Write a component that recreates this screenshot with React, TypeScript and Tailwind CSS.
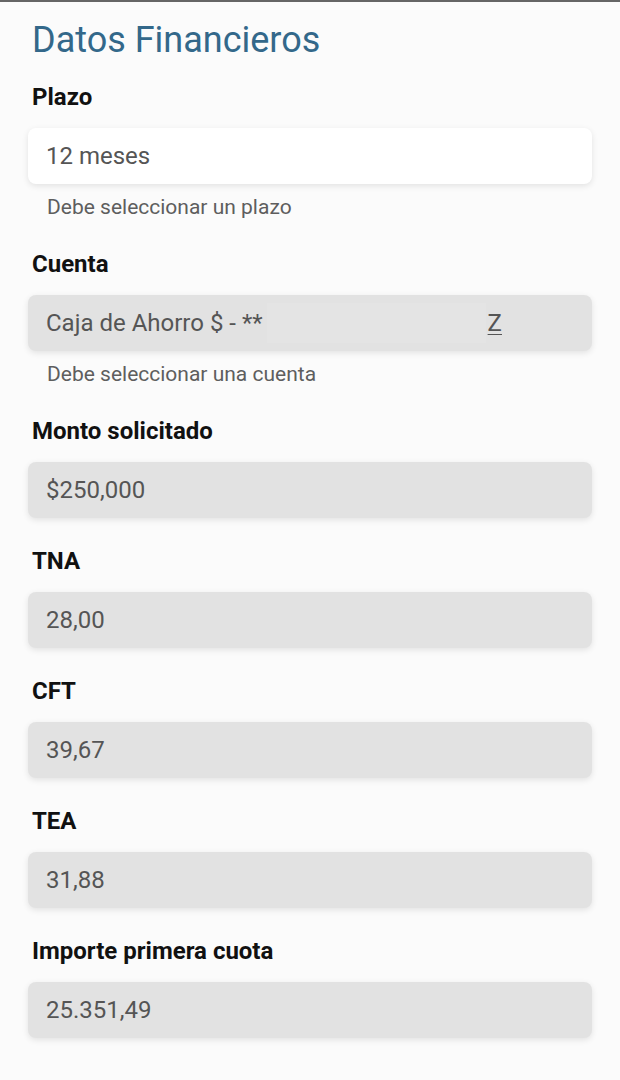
import React from 'react'

type Field = {
  label: string
  value: string
  helper?: string
  editable?: boolean
  masked?: boolean
}

const fields: Field[] = [
  { label: 'Plazo', value: '12 meses', helper: 'Debe seleccionar un plazo', editable: true },
  { label: 'Cuenta', value: 'Caja de Ahorro $ - **', helper: 'Debe seleccionar una cuenta', masked: true },
  { label: 'Monto solicitado', value: '$250,000' },
  { label: 'TNA', value: '28,00' },
  { label: 'CFT', value: '39,67' },
  { label: 'TEA', value: '31,88' },
  { label: 'Importe primera cuota', value: '25.351,49' },
]

export default function App() {
  return (
    <div className="min-h-[1080px] w-[620px] bg-[#fbfbfb] font-['Roboto',sans-serif]">
      <div className="h-[2px] bg-[#666666]" />
      <div className="px-7 pt-[18px]">
        <h1 className="pl-1 text-[36px] leading-[40px] text-[#33688a]">Datos Financieros</h1>

        {fields.map((f, i) => {
          const prev = fields[i - 1]
          const mt = i === 0 ? 'mt-[25px]' : prev.helper ? 'mt-[34px]' : 'mt-[31px]'
          return (
            <div key={f.label} className={mt}>
              <div className="pl-1 text-[24px] leading-[24px] font-bold text-[#111111]">{f.label}</div>
              <div
                className={`mt-[19px] flex h-14 items-center rounded-lg px-[18px] text-[24px] text-[#555555] shadow-[0_2px_6px_rgba(0,0,0,0.10)] ${
                  f.editable ? 'bg-white' : 'bg-[#e2e2e2]'
                }`}
              >
                <span className="whitespace-nowrap">{f.value}</span>
                {f.masked && (
                  <>
                    <span className="ml-1 h-10 flex-1 bg-[#e4e4e4]" />
                    <span className="ml-[2px] mr-[72px] underline decoration-1 underline-offset-[3px]">Z</span>
                  </>
                )}
              </div>
              {f.helper && (
                <div className="mt-3 pl-[19px] text-[21px] leading-[22px] text-[#5e5e5e]">{f.helper}</div>
              )}
            </div>
          )
        })}
      </div>
    </div>
  )
}
